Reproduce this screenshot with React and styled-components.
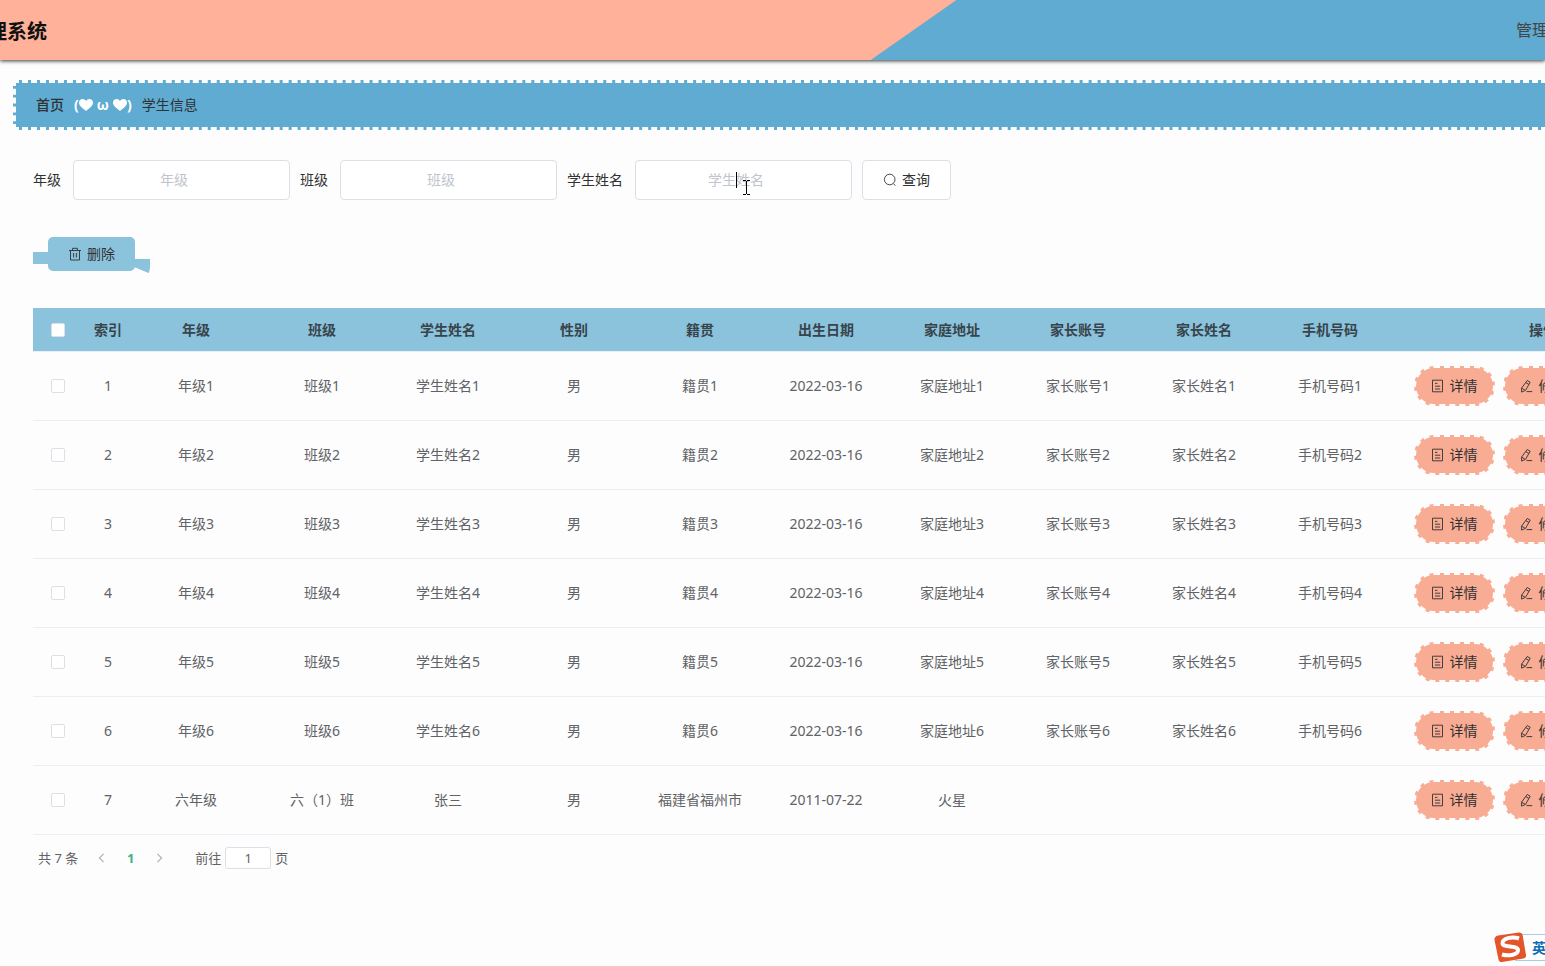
import React, { useState } from 'react';
import styled, { createGlobalStyle, css } from 'styled-components';

const columns = [
  { key: 'grade', label: '年级' },
  { key: 'className', label: '班级' },
  { key: 'name', label: '学生姓名' },
  { key: 'gender', label: '性别' },
  { key: 'origin', label: '籍贯' },
  { key: 'birthday', label: '出生日期' },
  { key: 'address', label: '家庭地址' },
  { key: 'parentAccount', label: '家长账号' },
  { key: 'parentName', label: '家长姓名' },
  { key: 'phone', label: '手机号码' },
];

const students = [1, 2, 3, 4, 5, 6].map((n) => ({
  id: n,
  grade: `年级${n}`,
  className: `班级${n}`,
  name: `学生姓名${n}`,
  gender: '男',
  origin: `籍贯${n}`,
  birthday: '2022-03-16',
  address: `家庭地址${n}`,
  parentAccount: `家长账号${n}`,
  parentName: `家长姓名${n}`,
  phone: `手机号码${n}`,
}));

students.push({
  id: 7,
  grade: '六年级',
  className: '六（1）班',
  name: '张三',
  gender: '男',
  origin: '福建省福州市',
  birthday: '2011-07-22',
  address: '火星',
  parentAccount: '',
  parentName: '',
  phone: '',
});

const SearchIcon = () => (
  <Icon viewBox="0 0 14 14">
    <circle cx="6.7" cy="6.5" r="5.3" />
    <path d="M10.4 10.6l2 2" />
  </Icon>
);

const TrashIcon = () => (
  <Icon viewBox="0 0 14 14">
    <path d="M1 3.5h12M2.5 3.5v9.5h9V3.5M4.6 3.5V1.3h4.8v2.2M5.6 6v4.4M8.4 6v4.4" />
  </Icon>
);

const DetailIcon = () => (
  <Icon viewBox="0 0 14 14">
    <path d="M1.500 1.200h10v11.600h-10zM4 4.400h2.400M4 7.200h5.200M4 10h5.200" />
  </Icon>
);

const EditIcon = () => (
  <Icon viewBox="0 0 14 14">
    <path d="M7.200 1.500l3 1.700-4.700 8.200-3.900 1.700v-4zM5.900 3.700l3 1.700M1.600 9.200l3.400 2M6.500 12.600h5.700" />
  </Icon>
);

const HeartIcon = () => (
  <Heart viewBox="0 0 14 12">
    <path d="M7 12C3 9 0 6.800 0 3.600 0 1.500 1.600 0 3.600 0 5 0 6.300.7 7 2 7.700.7 9 0 10.400 0 12.400 0 14 1.500 14 3.600 14 6.800 11 9 7 12z" />
  </Heart>
);

const App = () => {
  const [filters, setFilters] = useState({ grade: '', className: '', name: '' });
  const [selected, setSelected] = useState([]);
  const [page, setPage] = useState('1');

  const handleFilter = (key) => (e) => {
    setFilters({ ...filters, [key]: e.target.value });
  };

  const toggleRow = (id) => {
    setSelected(
      selected.includes(id) ? selected.filter((x) => x !== id) : [...selected, id]
    );
  };

  const toggleAll = () => {
    setSelected(selected.length === students.length ? [] : students.map((s) => s.id));
  };

  return (
    <Page>
      <GlobalStyle />
      <Header>
        <Title>理系统</Title>
        <User>管理</User>
      </Header>

      <Breadcrumb aria-label="breadcrumb">
        <Home href="#">首页</Home>
        <Separator>
          (<HeartIcon />
          <span>ω</span>
          <HeartIcon />)
        </Separator>
        <span>学生信息</span>
      </Breadcrumb>

      <Content>
        <SearchForm onSubmit={(e) => e.preventDefault()}>
          <Field>
            <label htmlFor="grade">年级</label>
            <Input
              id="grade"
              placeholder="年级"
              value={filters.grade}
              onChange={handleFilter('grade')}
            />
          </Field>
          <Field>
            <label htmlFor="className">班级</label>
            <Input
              id="className"
              placeholder="班级"
              value={filters.className}
              onChange={handleFilter('className')}
            />
          </Field>
          <Field>
            <label htmlFor="name">学生姓名</label>
            <InputBox>
              <Input
                id="name"
                placeholder="学生姓名"
                value={filters.name}
                onChange={handleFilter('name')}
              />
              <Pointer viewBox="0 0 16 26">
                <path d="M1.500 2v16M8 10.500h3m1 0h3M8 24.500h3m1 0h3M11.500 11v13" />
              </Pointer>
            </InputBox>
          </Field>
          <SearchButton type="submit">
            <SearchIcon />
            查询
          </SearchButton>
        </SearchForm>

        <Toolbar>
          <DeleteButton type="button">
            <TrashIcon />
            删除
          </DeleteButton>
        </Toolbar>

        <Table>
          <colgroup>
            <Col $width={50} />
            <Col $width={50} />
            {columns.map((col) => (
              <Col key={col.key} $width={126} />
            ))}
            <Col $width={300} />
          </colgroup>
          <thead>
            <tr>
              <Th>
                <Checkbox
                  aria-label="全选"
                  checked={selected.length === students.length}
                  onChange={toggleAll}
                />
              </Th>
              <Th>索引</Th>
              {columns.map((col) => (
                <Th key={col.key}>{col.label}</Th>
              ))}
              <Th>操作</Th>
            </tr>
          </thead>
          <tbody>
            {students.map((student) => (
              <tr key={student.id}>
                <Td>
                  <Checkbox
                    aria-label={`选择${student.id}`}
                    checked={selected.includes(student.id)}
                    onChange={() => toggleRow(student.id)}
                  />
                </Td>
                <Td>{student.id}</Td>
                {columns.map((col) => (
                  <Td key={col.key}>{student[col.key]}</Td>
                ))}
                <Td>
                  <Actions>
                    <ActionButton type="button">
                      <DetailIcon />
                      详情
                    </ActionButton>
                    <ActionButton type="button">
                      <EditIcon />
                      修改
                    </ActionButton>
                    <ActionButton type="button">
                      <TrashIcon />
                      删除
                    </ActionButton>
                  </Actions>
                </Td>
              </tr>
            ))}
          </tbody>
        </Table>

        <Pagination>
          <span>共 7 条</span>
          <Pager>
            <PageButton type="button" aria-label="上一页">
              <Arrow viewBox="0 0 8 12"><path d="M6.500 1l-5 5 5 5" /></Arrow>
            </PageButton>
            <PageButton type="button" $active>1</PageButton>
            <PageButton type="button" aria-label="下一页">
              <Arrow viewBox="0 0 8 12"><path d="M1.500 1l5 5-5 5" /></Arrow>
            </PageButton>
          </Pager>
          <Jump>
            前往
            <JumpInput value={page} onChange={(e) => setPage(e.target.value)} />
            页
          </Jump>
        </Pagination>
      </Content>

      <Ime>
        <ImeLogo viewBox="0 0 32 30">
          <path d="M4 3.500L25 .5q3-.4 3.600 2.500L32 23q.4 3-2.500 3.500L8 30q-3 .4-3.500-2.500L.5 8Q0 4.500 4 3.500z" fill="#e2562a" />
          <path
            d="M25 6.500C18 4 8 6.500 8.500 11.500c.5 4.500 15 1.500 15.500 6.500.4 4.500-9 6.500-16 4.500"
            fill="none"
            stroke="#fff"
            strokeWidth="4"
          />
        </ImeLogo>
        <ImeBar>英</ImeBar>
      </Ime>
    </Page>
  );
};

export default App;

const GlobalStyle = createGlobalStyle`
  * {
    box-sizing: border-box;
  }

  body {
    margin: 0;
    background: #fdfdfd;
    color: #303133;
    font-family: 'Noto Sans', 'Noto Sans CJK SC', sans-serif;
    font-size: 14px;
    line-height: 20px;
  }

  button,
  input {
    font: inherit;
    color: inherit;
  }

  button {
    cursor: pointer;
  }
`;

const Page = styled.div`
  min-height: 100vh;
  overflow: hidden;
`;

const Header = styled.header`
  display: flex;
  align-items: center;
  justify-content: space-between;
  height: 60px;
  background: linear-gradient(145deg, #ffb199 58.6%, #5fabd1 58.7%);
  box-shadow: 0 1px 4px rgba(0, 0, 0, 0.8);
`;

const Title = styled.h1`
  display: flex;
  justify-content: flex-end;
  width: 47px;
  margin: 0;
  padding-top: 3px;
  overflow: hidden;
  color: #111;
  font-size: 20px;
  line-height: 30px;
  white-space: nowrap;
`;

const User = styled.span`
  width: 29px;
  overflow: hidden;
  color: #444;
  font-size: 16px;
  white-space: nowrap;
`;

const Breadcrumb = styled.nav`
  display: flex;
  align-items: center;
  height: 50px;
  margin: 20px -20px 0 13px;
  padding: 0 20px;
  background: #5fabd1;
  border: 3px dashed #fdfdfd;
`;

const Home = styled.a`
  color: #303133;
  font-weight: 500;
  text-decoration: none;
`;

const Separator = styled.span`
  display: flex;
  align-items: center;
  margin: 0 10px;
  color: #fff;
  font-weight: bold;

  span {
    margin: 0 4px;
  }
`;

const Heart = styled.svg`
  width: 14px;
  height: 12px;
  fill: currentColor;
`;

const Content = styled.main`
  padding: 30px 0 0 33px;
`;

const SearchForm = styled.form`
  display: flex;
  gap: 10px;
`;

const Field = styled.div`
  display: flex;
  align-items: center;
  gap: 12px;
`;

const InputBox = styled.div`
  position: relative;
`;

const Input = styled.input`
  display: block;
  width: 217px;
  height: 40px;
  padding: 0 30px 2px 15px;
  background: #fff;
  border: 1px solid #dcdfe6;
  border-radius: 4px;
  outline: none;
  text-align: center;

  &::placeholder {
    color: #c0c4cc;
  }
`;

const Pointer = styled.svg`
  position: absolute;
  left: 100px;
  top: 10px;
  width: 16px;
  height: 26px;
  fill: none;
  stroke: #000;
  pointer-events: none;
`;

const Icon = styled.svg`
  width: 14px;
  height: 14px;
  fill: none;
  stroke: currentColor;
  stroke-width: 0.9;
`;

const buttonBase = css`
  display: flex;
  align-items: center;
  justify-content: center;
  gap: 5px;
  padding: 0;
  color: #303133;
`;

const SearchButton = styled.button`
  ${buttonBase}
  width: 89px;
  height: 40px;
  background: #fff;
  border: 1px solid #dcdfe6;
  border-radius: 4px;
`;

const Toolbar = styled.div`
  display: flex;
  padding: 37px 0 37px 15px;
`;

const DeleteButton = styled.button`
  ${buttonBase}
  position: relative;
  width: 87px;
  height: 34px;
  background: #8bc3dc;
  border: none;
  border-radius: 5px;

  &::before,
  &::after {
    content: '';
    position: absolute;
    background: #8bc3dc;
  }

  &::before {
    left: -15px;
    top: 15px;
    width: 16px;
    height: 12px;
  }

  &::after {
    right: -15px;
    top: 22px;
    width: 17px;
    height: 14px;
    clip-path: polygon(0 0, 100% 0, 100% 60%, 94% 100%, 84% 96%, 0 54%);
  }
`;

const Table = styled.table`
  width: 100%;
  min-width: 1660px;
  table-layout: fixed;
  border-collapse: separate;
  border-spacing: 0;
`;

const Col = styled.col`
  width: ${({ $width }) => $width}px;
`;

const Th = styled.th`
  height: 44px;
  padding: 0;
  background: #8bc3dc;
  background-clip: padding-box;
  border-bottom: 1px solid #ebeef5;
  color: #38444b;
  font-weight: bold;
`;

const Td = styled.td`
  height: 69px;
  padding: 0;
  border-bottom: 1px solid #ebeef5;
  color: #606266;
  text-align: center;
`;

const Checkbox = styled.input.attrs({ type: 'checkbox' })`
  appearance: none;
  display: block;
  width: 14px;
  height: 14px;
  margin: 0 auto;
  background: #fff;
  border: 1px solid #dcdfe6;
  border-radius: 2px;

  &:checked {
    background: #5fabd1;
  }
`;

const Actions = styled.div`
  display: flex;
  justify-content: center;
  gap: 8px;
`;

const ActionButton = styled.button`
  ${buttonBase}
  width: 81px;
  height: 40px;
  background: #f9ac94;
  border: 2px dashed #fdfdfd;
  border-radius: 20px;
`;

const Pagination = styled.div`
  display: flex;
  align-items: center;
  padding: 12px 5px;
  color: #606266;
  font-size: 13px;
  line-height: 22px;
`;

const Pager = styled.div`
  display: flex;
  margin: 0 21px 0 9px;
`;

const PageButton = styled.button`
  display: flex;
  align-items: center;
  justify-content: center;
  width: 29px;
  height: 22px;
  padding: 0;
  background: transparent;
  border: none;
  color: ${({ $active }) => ($active ? '#3fb488' : '#b0b3b8')};
  font-weight: bold;
`;

const Arrow = styled.svg`
  width: 7px;
  height: 10px;
  fill: none;
  stroke: currentColor;
  stroke-width: 1.5;
`;

const Jump = styled.label`
  display: flex;
  align-items: center;
  gap: 4px;
`;

const JumpInput = styled.input`
  width: 46px;
  height: 22px;
  padding: 0;
  background: #fff;
  border: 1px solid #dcdfe6;
  border-radius: 3px;
  text-align: center;
`;

const Ime = styled.div`
  position: fixed;
  right: 0;
  bottom: 4px;
  display: flex;
  align-items: center;
`;

const ImeLogo = styled.svg`
  position: relative;
  width: 32px;
  height: 30px;
`;

const ImeBar = styled.div`
  width: 30px;
  height: 27px;
  margin-left: -11px;
  padding-left: 17px;
  overflow: hidden;
  background: #fff;
  border: solid #a9cbe6;
  border-width: 1px 0;
  color: #0b6fb8;
  font-weight: bold;
  line-height: 25px;
`;
